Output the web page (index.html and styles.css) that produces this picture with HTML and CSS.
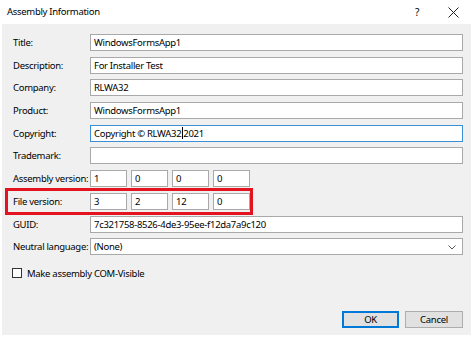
FILE: index.html
```html
<!DOCTYPE html>
<html>
<head>
<meta charset="utf-8">
<link rel="stylesheet" href="styles.css">
</head>
<body>
<div class="window">
  <div class="titlebar">
    <span class="title">Assembly Information</span>
    <span class="help">?</span>
    <span class="close">
      <svg width="11" height="11" viewBox="0 0 11 11"><path d="M0.5 0.5 L10.5 10.5 M10.5 0.5 L0.5 10.5" stroke="#222" stroke-width="1" fill="none"/></svg>
    </span>
  </div>
  <div class="client">
    <div class="form">
      <label class="lbl">Title:</label>
      <div class="box">WindowsFormsApp1</div>
      <label class="lbl">Description:</label>
      <div class="box">For Installer Test</div>
      <label class="lbl">Company:</label>
      <div class="box">RLWA32</div>
      <label class="lbl">Product:</label>
      <div class="box">WindowsFormsApp1</div>
      <label class="lbl">Copyright:</label>
      <div class="box focus">Copyright © RLWA32<span class="caret"></span>2021</div>
      <label class="lbl">Trademark:</label>
      <div class="box"></div>
      <label class="lbl">Assembly version:</label>
      <div class="versions">
        <div class="box vbox">1</div>
        <div class="box vbox">0</div>
        <div class="box vbox">0</div>
        <div class="box vbox">0</div>
      </div>
      <label class="lbl">File version:</label>
      <div class="versions">
        <div class="box vbox">3</div>
        <div class="box vbox">2</div>
        <div class="box vbox">12</div>
        <div class="box vbox">0</div>
      </div>
      <label class="lbl">GUID:</label>
      <div class="box">7c321758-8526-4de3-95ee-f12da7a9c120</div>
      <label class="lbl">Neutral language:</label>
      <div class="box combo">(None)
        <svg class="arrow" width="8" height="5" viewBox="0 0 8 5"><path d="M0.5 0.5 L4 4 L7.5 0.5" stroke="#555" stroke-width="1" fill="none"/></svg>
      </div>
    </div>
    <div class="check">
      <span class="cb"></span>
      <span>Make assembly COM-Visible</span>
    </div>
    <div class="buttons">
      <div class="btn default">OK</div>
      <div class="btn">Cancel</div>
    </div>
    <div class="highlight"></div>
  </div>
</div>
</body>
</html>
```
FILE: styles.css
```css
html, body {
  margin: 0;
  padding: 0;
  background: #ffffff;
}
.window {
  width: 474px;
  height: 339px;
  background: #ffffff;
  font-family: "Noto Sans", "Open Sans", sans-serif;
  font-size: 9.5px;
  letter-spacing: -0.3px;
  color: #000;
  display: flex;
  flex-direction: column;
  overflow: hidden;
}
.titlebar {
  height: 24px;
  display: flex;
  align-items: center;
  padding-left: 7px;
  flex: none;
}
.title {
  font-size: 9.5px;
  flex: 1;
  margin-top: -1px;
}
.help {
  font-size: 10px;
  width: 34px;
  text-align: center;
  margin-right: 2px;
}
.close {
  width: 34px;
  display: flex;
  justify-content: center;
  margin-right: 4px;
}
.client {
  position: relative;
  background: #f0f0f0;
  margin: 0 3px 4px 2px;
  flex: 1;
  padding: 10px 8px 0 11px;
  display: flex;
  flex-direction: column;
}
.form {
  display: grid;
  grid-template-columns: 77px 373px;
  grid-auto-rows: 17px;
  row-gap: 5.7px;
  align-items: center;
}
.lbl {
  white-space: nowrap;
  line-height: 17px;
}
.box {
  height: 17px;
  box-sizing: border-box;
  border: 1px solid #a9a9a9;
  background: #fff;
  line-height: 15px;
  padding-left: 3px;
  white-space: nowrap;
  overflow: hidden;
}
.box.focus {
  border-color: #3c8fd6;
}
.caret {
  display: inline-block;
  width: 1px;
  height: 12px;
  background: #000;
  vertical-align: -2px;
  margin: 0 0 0 1px;
}
.versions {
  display: flex;
  gap: 4px;
}
.vbox {
  width: 37px;
  padding-left: 3px;
}
.combo {
  position: relative;
}
.arrow {
  position: absolute;
  right: 6px;
  top: 6px;
}
.check {
  display: flex;
  align-items: center;
  gap: 5px;
  margin-top: 11px;
  height: 14px;
}
.cb {
  width: 10px;
  height: 10px;
  border: 1px solid #333;
  background: #fff;
  box-sizing: border-box;
  margin-left: -1px;
}
.buttons {
  margin-top: auto;
  margin-bottom: 7px;
  display: flex;
  justify-content: flex-end;
  gap: 6px;
}
.btn {
  width: 58px;
  height: 17px;
  box-sizing: border-box;
  border: 1px solid #adadad;
  background: #e1e1e1;
  text-align: center;
  line-height: 15px;
}
.btn.default {
  width: 57px;
  border: 2px solid #0078d7;
  line-height: 13px;
}
.highlight {
  position: absolute;
  left: 3px;
  top: 164px;
  width: 242px;
  height: 21px;
  border: 3px solid #e3131f;
  pointer-events: none;
}
```
